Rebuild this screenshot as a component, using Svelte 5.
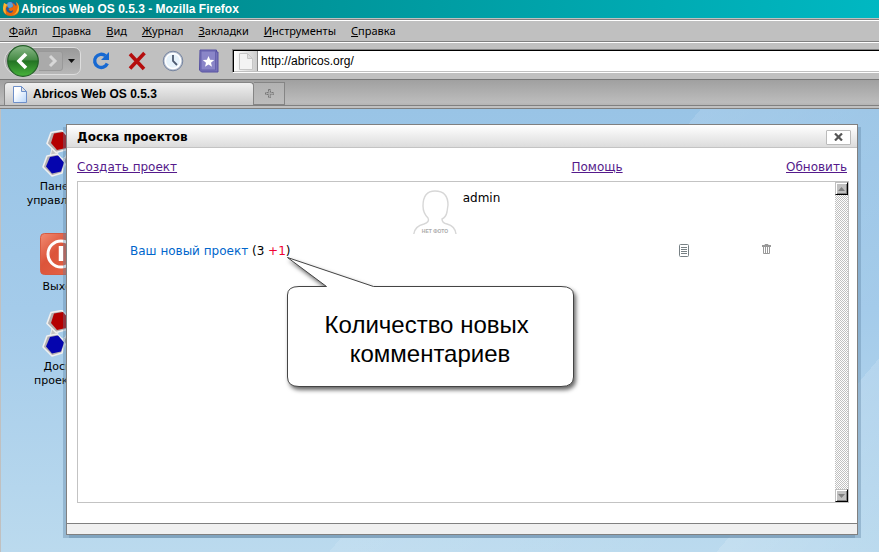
<script>
  const menus = ['Файл', 'Правка', 'Вид', 'Журнал', 'Закладки', 'Инструменты', 'Справка'];
  const shortcuts = [
    { kind: 'molecule', lines: ['Панель', 'управления'], top: 21 },
    { kind: 'power', lines: ['Выход'], top: 121 },
    { kind: 'molecule', lines: ['Доска', 'проектов'], top: 201 }
  ];
  let address = $state('http://abricos.org/');
</script>

<div class="browser">
  <header class="titlebar">
    <svg width="18" height="18" viewBox="0 0 18 18" aria-hidden="true">
      <circle cx="9" cy="8" r="6.5" fill="#245a9c" />
      <circle cx="8" cy="5" r="3" fill="#5aa0d8" />
      <path d="M2 3 1 8q0 8 8 8t8-7q0-5-3-7 1 3 0 4-2-3-4-3 2 2 1 4L8 8q-2 0-1 2 2 2 4 0 0 3-3 3-4-1-4-5L6 6 4 5z" fill="#e8690b" />
      <path d="M2 3 1 8q0 4 3 6-1-5 0-8l2-1-2-1zM14 2q3 4 1 8-1 4-5 5 7-1 7-6 0-5-3-7z" fill="#fbb631" />
    </svg>
    <h1>Abricos Web OS 0.5.3 - Mozilla Firefox</h1>
  </header>

  <nav class="menubar">
    {#each menus as menu}
      <button type="button"><u>{menu[0]}</u>{menu.slice(1)}</button>
    {/each}
  </nav>

  <div class="toolbar">
    <div class="history">
      <button type="button" class="back" aria-label="Назад">
        <svg width="32" height="32" viewBox="0 0 32 32">
          <defs>
            <linearGradient id="green" x1="0" y1="0" x2="0" y2="1">
              <stop offset="0" stop-color="#8bb98a" /><stop offset=".46" stop-color="#468b45" />
              <stop offset=".5" stop-color="#237323" /><stop offset="1" stop-color="#48b33c" />
            </linearGradient>
          </defs>
          <circle cx="16" cy="16" r="15.3" fill="url(#green)" stroke="#245f28" stroke-width="1.2" />
          <path d="m19 9-7 7 7 7" fill="none" stroke="#fff" stroke-width="3.6" />
        </svg>
      </button>
      <button type="button" class="forward" aria-label="Вперёд">
        <svg width="24" height="20" viewBox="0 0 24 20">
          <path d="M0 .5h21q2.5 0 2.5 2.500v14q0 2.500-2.500 2.500H0" fill="#aaa" stroke="#999" />
          <path d="m11 5 5 5-5 5" fill="none" stroke="#d8d8d8" stroke-width="3" />
        </svg>
      </button>
      <button type="button" class="drop" aria-label="История">
        <svg width="7" height="4" viewBox="0 0 7 4"><path d="M0 0h7L3.500 4z" fill="#111" /></svg>
      </button>
    </div>
    <button type="button" class="tool" aria-label="Обновить страницу">
      <svg width="22" height="22" viewBox="0 0 22 22">
        <path d="M15.500 5.800A6.600 6.600 0 1 0 17.300 13.500" fill="none" stroke="#1769d2" stroke-width="3.400" />
        <path d="M19 2v8h-8z" fill="#1769d2" />
      </svg>
    </button>
    <button type="button" class="tool" aria-label="Остановить">
      <svg width="22" height="22" viewBox="0 0 22 22">
        <path d="m4 4 14 15M18.500 3 4 18.500" stroke="#b50d0d" stroke-width="3.600" />
      </svg>
    </button>
    <button type="button" class="tool" aria-label="Журнал">
      <svg width="22" height="22" viewBox="0 0 22 22">
        <circle cx="11" cy="11" r="9.800" fill="#b9c3d3" stroke="#7785a0" />
        <circle cx="11" cy="11" r="7.600" fill="#e6f2fb" stroke="#fff" stroke-width="1.500" />
        <path d="M11 5v6l4 4" fill="none" stroke="#4d5a70" stroke-width="1.800" />
      </svg>
    </button>
    <button type="button" class="tool" aria-label="Закладки">
      <svg width="22" height="24" viewBox="0 0 22 24">
        <path d="M2 1h16.500v2H20v20H3.500L1.500 21z" fill="#7772b8" stroke="#5651a1" />
        <path d="M3 2h14.500v19H3z" fill="#8a86c8" stroke="#6762ad" />
        <path d="m10.500 7 1.600 3.800 4.100.3-3.200 2.600 1 4-3.500-2.200L7 17.700l1-4-3.200-2.600 4.100-.3z" fill="#fff" />
      </svg>
    </button>
    <div class="address">
      <span class="favicon">
        <svg width="14" height="17" viewBox="0 0 14 17"><path d="M.5.500h8l5 5v11H.500zM8.500.500v5h5" fill="#f3f3f3" stroke="#c6c6c6" /></svg>
      </span>
      <input type="text" aria-label="Адрес" bind:value={address} />
    </div>
  </div>

  <div class="tabs">
    <button type="button" class="tab">
      <svg width="14" height="17" viewBox="0 0 14 17">
        <defs><linearGradient id="sheet" x1="0" y1="0" x2="1" y2="1"><stop offset=".3" stop-color="#fff" /><stop offset="1" stop-color="#b8d6fa" /></linearGradient></defs>
        <path d="M.5.500h8l5 5v11H.500zM8.500.500v5h5" fill="url(#sheet)" stroke="#6d8fc9" />
      </svg>
      Abricos Web OS 0.5.3
    </button>
    <button type="button" class="newtab" aria-label="Новая вкладка">
      <svg width="9" height="9" viewBox="0 0 9 9"><path d="M3.500.500h2v3h3v2h-3v3h-2v-3h-3v-2h3z" fill="#aaa" stroke="#777" stroke-dasharray="2 1" /></svg>
    </button>
  </div>

  <main class="desktop">
    {#each shortcuts as item}
      <a href="#open" class="shortcut" style="top: {item.top}px">
        {#if item.kind === 'power'}
          <svg width="48" height="48" viewBox="0 0 48 48">
            <defs><linearGradient id="red" x1="0" y1="0" x2="1" y2="1"><stop offset="0" stop-color="#f18b72" /><stop offset=".4" stop-color="#dc543a" /><stop offset="1" stop-color="#e8694b" /></linearGradient></defs>
            <rect x=".5" y="3.500" width="42" height="41" rx="4" fill="url(#red)" stroke="#d65b42" />
            <circle cx="21" cy="24" r="13" fill="none" stroke="#fff" stroke-width="3" />
            <path d="M21 16v15" stroke="#fff" stroke-width="4.500" />
          </svg>
        {:else}
          <svg width="48" height="48" viewBox="0 0 48 48">
            <path d="m12 18 6 3-1 8-7-2zM21 30l14-10 4 4-12 10z" fill="#c4c4c4" stroke="#eee" />
            <path d="M11 2.500 22 .5l8 8-3 11-11 3-9-9z" fill="#b3afaf" stroke="#f0f0f0" stroke-width="1.600" stroke-linejoin="round" />
            <path d="m14 3.500 9-1.500 6 7-3 9-9 2-6-7z" fill="#b40000" />
            <path d="m7 26 10-2 8 8-3 11-10 3-9-9z" fill="#b3afaf" stroke="#f0f0f0" stroke-width="1.600" stroke-linejoin="round" />
            <path d="m10 27 8-1.500 6 7-3 9-9 2-6-7z" fill="#0505ae" />
            <path d="m27 23 9-1 6 8-4 9-10 1-4-9z" fill="#999" stroke="#eee" />
          </svg>
        {/if}
        {#each item.lines as line}<span>{line}</span>{/each}
      </a>
    {/each}

    <section class="window">
      <div class="caption">
        <h2>Доска проектов</h2>
        <button type="button" aria-label="Закрыть">
          <svg width="9" height="8" viewBox="0 0 9 8"><path d="m1 .5 7 7M8 .5l-7 7" stroke="#555" stroke-width="2.200" /></svg>
        </button>
      </div>
      <div class="body">
        <div class="links">
          <a href="#create">Создать проект</a>
          <a href="#help" class="help">Помощь</a>
          <a href="#refresh">Обновить</a>
        </div>
        <div class="list">
          <div class="content">
            <div class="user">
              <svg width="44" height="45" viewBox="0 0 44 45" role="img" aria-label="Нет фото">
                <path d="M.8 44Q2 36 11 34q6-2 4-6-5-5-5-12Q10 1 22 1q13 0 13 14l-1 7q-1 5-5 7 0 4 5 5 8 2 9 10" fill="none" stroke="#d7d7d7" stroke-width="1.400" />
                <text x="22" y="43" text-anchor="middle">НЕТ ФОТО</text>
              </svg>
              <span>admin</span>
            </div>
            <div class="project">
              <div class="name">
                <a href="#project">Ваш новый проект</a> (3 <em>+1</em>)
                <div class="callout">
                  <svg width="300" height="142" viewBox="0 0 300 142" aria-hidden="true">
                    <path d="M1.500 2.500 87.500 31.500H275Q287.500 31.500 287.500 40V122Q287.500 131.500 275 131.500H13Q1.500 131.500 1.500 122V40Q1.500 31.500 13 31.500H40.500Z" fill="#fff" stroke="#444" />
                  </svg>
                  <p>Количество новых <br />комментариев</p>
                </div>
              </div>
              <button type="button" class="edit" aria-label="Редактировать">
                <svg width="10" height="13" viewBox="0 0 10 13"><rect x=".5" y=".5" width="9" height="12" rx="1" fill="#fff" stroke="#778084" /><path d="M2 3.500h6M2 5.500h6M2 7.500h6M2 9.500h6" stroke="#778084" /></svg>
              </button>
              <button type="button" class="delete" aria-label="Удалить">
                <svg width="9" height="10" viewBox="0 0 9 10"><path d="M3 1V.5h3V1M0 1.500h9v1H0zM1.500 3v6.500h6V3M3.500 3v6M5.500 3v6" fill="none" stroke="#999" /></svg>
              </button>
            </div>
          </div>
          <div class="scroll">
            <button type="button" aria-label="Вверх"><svg width="7" height="4" viewBox="0 0 7 4"><path d="M0 4h7L3.500 0z" fill="#808080" /></svg></button>
            <button type="button" aria-label="Вниз"><svg width="7" height="4" viewBox="0 0 7 4"><path d="M0 0h7L3.500 4z" fill="#808080" /></svg></button>
          </div>
        </div>
      </div>
      <footer></footer>
    </section>
  </main>
</div>

<style>
  .browser {
    display: flex;
    flex-direction: column;
    height: 100vh;
    min-height: 400px;
    background: #c0c0c0;
    color: #000;
    font: 12px/16px 'Liberation Sans', Arial, sans-serif;
  }
  .browser * { box-sizing: border-box; }
  svg { display: block; flex: none; }
  button {
    display: flex;
    align-items: center;
    justify-content: center;
    margin: 0;
    padding: 0;
    border: 0;
    background: none;
    color: inherit;
    font: inherit;
  }
  h1, h2, p { margin: 0; }
  .titlebar {
    display: flex;
    align-items: center;
    gap: 1px;
    flex: none;
    height: 18px;
    padding-left: 2px;
    background: linear-gradient(90deg, #008284, #00b8c2);
    color: #fff;
  }
  h1 { font-size: 12px; line-height: 16px; }
  .menubar {
    display: flex;
    flex: none;
    gap: 15px;
    height: 25px;
    padding: 1px 9px 1px;
    border-top: 1px solid #c0c0c0;
    border-bottom: 1px solid #fff;
    box-shadow: inset 0 1px #808080, inset 0 2px #fff, inset 0 -1px #808080;
    font-family: 'Noto Sans', Tahoma, sans-serif;
    font-size: 11px;
  }
  .toolbar {
    display: flex;
    align-items: center;
    flex: none;
    height: 36px;
    padding-left: 4px;
  }
  .history {
    display: flex;
    align-items: center;
    width: 77px;
    height: 28px;
    margin-right: 9px;
    border: 1px solid #ddd;
    border-radius: 14px 7px 7px 14px;
    background: linear-gradient(#999, #b8b8b8);
  }
  .back { margin-left: 2px; }
  .drop { width: 16px; height: 20px; }
  .tool { width: 22px; margin-right: 14px; }
  .address {
    display: flex;
    flex: 1;
    height: 24px;
    margin-left: -2px;
    border: 1px solid #808080;
    border-right: 0;
    border-bottom-color: #fff;
    background: #fff;
    box-shadow: inset 1px 1px #000, inset 0 -1px #c0c0c0;
  }
  .favicon {
    display: flex;
    align-items: center;
    justify-content: center;
    width: 24px;
    margin: 1px 0 1px 1px;
    border-right: 1px solid #888;
    background: linear-gradient(90deg, #fff, #ccc);
  }
  input {
    flex: 1;
    min-width: 0;
    margin: 1px 0;
    padding: 0 0 0 3px;
    border: 0;
    outline: 0;
    background: none;
    font: 12px/16px 'Liberation Sans', Arial, sans-serif;
  }
  .tabs {
    display: flex;
    align-items: flex-end;
    flex: none;
    height: 30px;
    padding: 0 0 3px 4px;
    border-top: 1px solid #777;
    border-bottom: 1px solid #808080;
    background: linear-gradient(#c0c0c0, #c0c0c0) bottom / 100% 2px no-repeat, linear-gradient(#808080, #808080) 0 25px / 100% 1px no-repeat, linear-gradient(#a0a0a0, #bcbcbc 80%, #aaa);
  }
  .tab {
    justify-content: flex-start;
    gap: 6px;
    width: 250px;
    height: 23px;
    padding-left: 8px;
    border: 1px solid #858585;
    border-bottom: 0;
    border-radius: 4px 4px 0 0;
    background: linear-gradient(#f0f0f0, #c7c7c7);
    font-weight: bold;
  }
  .newtab {
    width: 31px;
    height: 23px;
    border: 1px solid #858585;
    border-left: 0;
    background: linear-gradient(#b2b2b2, #bcbcbc);
  }
  .desktop {
    position: relative;
    flex: 1;
    overflow: hidden;
    border-left: 1px solid #c0c0c0;
    background:
      linear-gradient(130deg, #fff0 56%, #ffffff1c 56%, #fff0 84%, #fff0 87%, #ffffff24 87%, #fff0),
      linear-gradient(#99c4e6, #a4cbea 45%, #bbdaee);
  }
  .shortcut {
    position: absolute;
    left: 18px;
    display: flex;
    flex-direction: column;
    align-items: center;
    width: 84px;
    color: #000;
    font: 11px/14px 'DejaVu Sans', Verdana, sans-serif;
    text-decoration: none;
  }
  .shortcut svg { margin: 0 0 2px 6px; }
  .window {
    position: absolute;
    inset: 15px 21px 17px 65px;
    display: flex;
    flex-direction: column;
    border: 1px solid #808080;
    background: #fff;
    box-shadow: -3px 3px #5c83a260, 3px 3px #5c83a260;
    font: 12px/16px 'DejaVu Sans', Verdana, sans-serif;
  }
  .caption {
    display: flex;
    align-items: center;
    justify-content: space-between;
    flex: none;
    height: 23px;
    padding: 2px 6px 0 10px;
    border-bottom: 1px solid #c3c3c3;
    background: linear-gradient(#fff, #dcdcdc);
  }
  h2 { font-size: 12px; line-height: 16px; }
  .caption button {
    width: 25px;
    height: 15px;
    border: 1px solid #bbb;
    border-radius: 1px;
    background: #fff;
  }
  .body {
    display: flex;
    flex: 1;
    flex-direction: column;
    min-height: 0;
    padding: 11px 8px 20px 10px;
  }
  .links {
    display: flex;
    flex: none;
    justify-content: space-between;
    height: 22px;
    padding-right: 2px;
  }
  .links a { color: #551a8b; }
  .help { margin-left: 30%; }
  .list {
    display: flex;
    flex: 1;
    min-height: 0;
    border: 1px solid #c3c3c3;
  }
  .content { flex: 1; padding-top: 8px; }
  .user {
    display: flex;
    justify-content: center;
    gap: 6px;
    height: 53px;
  }
  .user text { fill: #aaa; font: bold 5px 'Liberation Sans', Arial, sans-serif; }
  .project {
    display: flex;
    align-items: flex-start;
    padding-left: 52px;
  }
  .name {
    position: relative;
    flex: 1;
    white-space: nowrap;
  }
  .name a { color: #06c; text-decoration: none; }
  .name em { color: #f00033; font-style: normal; }
  .edit { width: 82px; padding-top: 1px; }
  .delete { width: 82px; margin-right: 28px; padding-top: 1px; }
  .callout {
    position: absolute;
    z-index: 1;
    top: 12px;
    left: 156px;
    width: 300px;
  }
  .callout svg { filter: drop-shadow(2px 3px 2px #0009); }
  .callout p {
    position: absolute;
    inset: 55px 12px auto 0;
    font: 24px/29px 'Liberation Sans', Arial, sans-serif;
    text-align: center;
    white-space: pre-wrap;
  }
  .scroll {
    display: flex;
    flex: none;
    flex-direction: column;
    justify-content: space-between;
    width: 13px;
    background: repeating-conic-gradient(#c0c0c0 0 25%, #fff 0 50%) 0 0 / 2px 2px;
  }
  .scroll button {
    width: 13px;
    height: 13px;
    border: 1px solid #c0c0c0;
    border-right-color: #000;
    border-bottom-color: #000;
    background: #c0c0c0;
    box-shadow: inset 1px 1px #fff, inset -1px -1px #808080;
  }
  footer {
    flex: none;
    height: 11px;
    border-top: 1px solid #808080;
    background: #f0f0f0;
  }
</style>
